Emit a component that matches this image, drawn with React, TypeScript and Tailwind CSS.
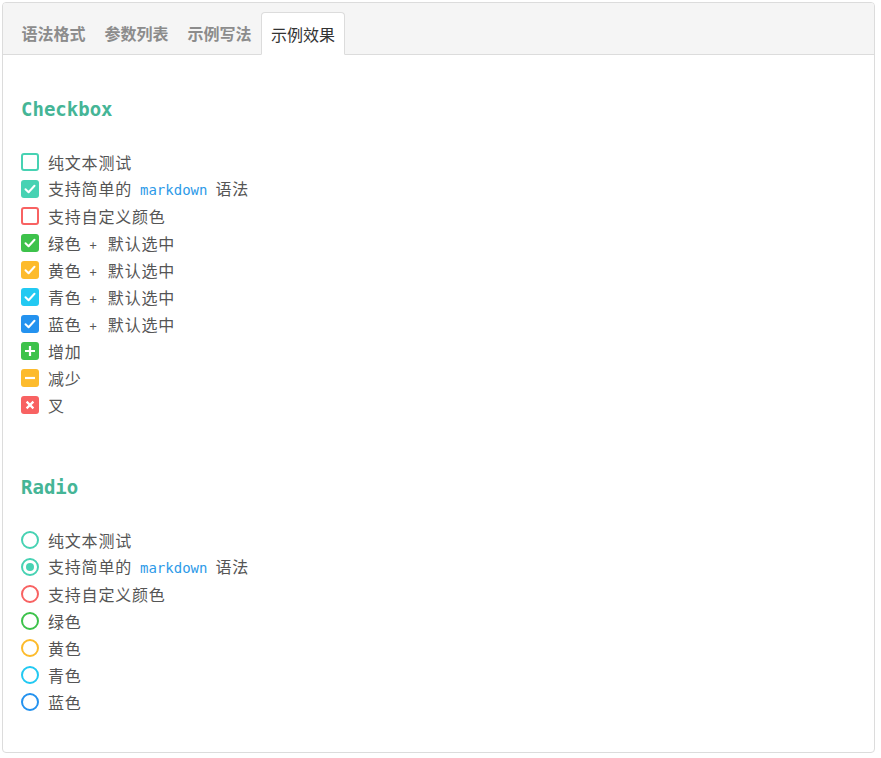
import React from 'react';

type Kind = 'empty' | 'check' | 'plus' | 'minus' | 'cross';

const Md = () => (
  <code className="mx-[8px] font-['DejaVu_Sans_Mono',monospace] text-[14px] tracking-normal text-[#2d9ae8]">markdown</code>
);

const Plus = () => <span className="ml-[8px] mr-[11px] text-[13px] tracking-normal">+</span>;

const checkItems: { color: string; kind: Kind; label: React.ReactNode }[] = [
  { color: '#47d2b3', kind: 'empty', label: '纯文本测试' },
  { color: '#47d2b3', kind: 'check', label: <>支持简单的<Md />语法</> },
  { color: '#f86262', kind: 'empty', label: '支持自定义颜色' },
  { color: '#3dc24b', kind: 'check', label: <>绿色<Plus />默认选中</> },
  { color: '#fdbb2c', kind: 'check', label: <>黄色<Plus />默认选中</> },
  { color: '#22c9f2', kind: 'check', label: <>青色<Plus />默认选中</> },
  { color: '#2492ef', kind: 'check', label: <>蓝色<Plus />默认选中</> },
  { color: '#3dc24b', kind: 'plus', label: '增加' },
  { color: '#fdbb2c', kind: 'minus', label: '减少' },
  { color: '#f86262', kind: 'cross', label: '叉' },
];

const radioItems: { color: string; checked?: boolean; label: React.ReactNode }[] = [
  { color: '#47d2b3', label: '纯文本测试' },
  { color: '#47d2b3', checked: true, label: <>支持简单的<Md />语法</> },
  { color: '#f86262', label: '支持自定义颜色' },
  { color: '#3dc24b', label: '绿色' },
  { color: '#fdbb2c', label: '黄色' },
  { color: '#22c9f2', label: '青色' },
  { color: '#2492ef', label: '蓝色' },
];

const Box = ({ color, kind }: { color: string; kind: Kind }) => {
  if (kind === 'empty') {
    return (
      <span
        className="block w-[18px] h-[18px] rounded-[3px] border-2 bg-white shrink-0"
        style={{ borderColor: color }}
      />
    );
  }
  return (
    <span
      className="flex items-center justify-center w-[18px] h-[18px] rounded-[3px] shrink-0"
      style={{ backgroundColor: color }}
    >
      <svg width="14" height="14" viewBox="0 0 14 14" fill="none" stroke="white" strokeWidth="2" strokeLinecap="round" strokeLinejoin="round">
        {kind === 'check' && <path d="M2.5 7.2 L5.6 10.2 L11.5 3.8" />}
        {kind === 'plus' && <path d="M7 2 V12 M2 7 H12" strokeLinecap="butt" strokeWidth="2.2" />}
        {kind === 'minus' && <path d="M2 7 H12" strokeLinecap="butt" strokeWidth="2.2" />}
        {kind === 'cross' && <path d="M3.6 3.6 L10.4 10.4 M10.4 3.6 L3.6 10.4" strokeLinecap="butt" strokeWidth="2.2" />}
      </svg>
    </span>
  );
};

const Radio = ({ color, checked }: { color: string; checked?: boolean }) => (
  <span
    className="flex items-center justify-center w-[18px] h-[18px] rounded-full border-2 bg-white shrink-0"
    style={{ borderColor: color }}
  >
    {checked && <span className="block w-[8px] h-[8px] rounded-full" style={{ backgroundColor: color }} />}
  </span>
);

const tabs = ['语法格式', '参数列表', '示例写法', '示例效果'];

export default function App() {
  return (
    <div className="pl-[2px] pt-[2px] font-['Noto_Sans_CJK_SC',sans-serif] bg-white">
      <div className="w-[873px] h-[751px] border border-[#dcdcdc] rounded-[4px] overflow-hidden">
        <div className="flex items-end h-[52px] bg-[#f5f5f5] border-b border-[#dcdcdc] pl-[9px]">
          {tabs.map((t, i) =>
            i === 3 ? (
              <div
                key={t}
                className="h-[43px] -mb-px px-[9px] flex items-center bg-white border border-[#dcdcdc] border-b-white rounded-t-[4px] text-[16px] text-[#333]"
              >
                {t}
              </div>
            ) : (
              <div
                key={t}
                className="h-[43px] px-[9.5px] flex items-center text-[16px] font-bold text-[#8c8c8c]"
              >
                {t}
              </div>
            ),
          )}
        </div>
        <div className="pl-[18px] pt-[36px]">
          <h2 className="h-[36px] flex items-center font-['DejaVu_Sans_Mono',monospace] font-bold text-[19px] text-[#45b596]">
            Checkbox
          </h2>
          <ul className="mt-[21px]">
            {checkItems.map((it, i) => (
              <li key={i} className="h-[27px] flex items-center gap-[9px] text-[16px] tracking-[0.8px] text-[#555]">
                <Box color={it.color} kind={it.kind} />
                <span>{it.label}</span>
              </li>
            ))}
          </ul>
          <h2 className="mt-[51px] h-[36px] flex items-center font-['DejaVu_Sans_Mono',monospace] font-bold text-[19px] text-[#45b596]">
            Radio
          </h2>
          <ul className="mt-[21px]">
            {radioItems.map((it, i) => (
              <li key={i} className="h-[27px] flex items-center gap-[9px] text-[16px] tracking-[0.8px] text-[#555]">
                <Radio color={it.color} checked={it.checked} />
                <span>{it.label}</span>
              </li>
            ))}
          </ul>
        </div>
      </div>
    </div>
  );
}
